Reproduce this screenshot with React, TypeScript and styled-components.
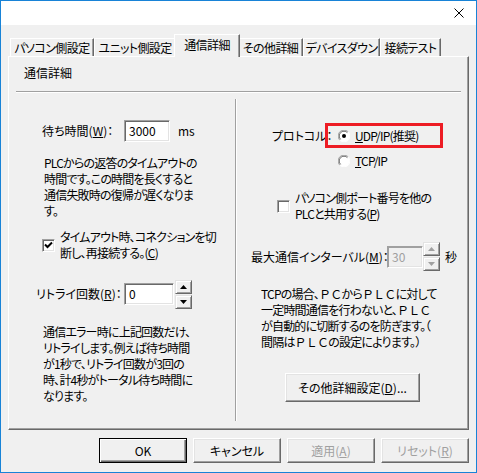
import React from 'react';
import styled, { createGlobalStyle, css } from 'styled-components';

const Global = createGlobalStyle`
  html, body { margin: 0; padding: 0; background: #fff; }
  body {
    font-family: "Noto Sans CJK JP", "Noto Sans", sans-serif;
    font-size: 12px;
    color: #000;
  }
  * { box-sizing: border-box; }
`;

const Window = styled.div`
  width: 477px;
  height: 473px;
  border: 1px solid #1883d7;
  background: #f0f0f0;
  display: flex;
  flex-direction: column;
  font-feature-settings: "palt";
`;

const TitleBar = styled.div`
  height: 24px;
  background: #fff;
  display: flex;
  justify-content: flex-end;
  align-items: center;
  padding-right: 12px;
`;

const Body = styled.div`
  padding: 9px 7px 0 7px;
  display: flex;
  flex-direction: column;
`;

const TabStrip = styled.div`
  height: 22px;
  display: flex;
  align-items: flex-end;
  padding-left: 2px;
`;

const Tab = styled.div<{ $w: number; $active?: boolean }>`
  width: ${p => p.$w}px;
  height: 18px;
  background: #f0f0f0;
  border-top: 1px solid #fff;
  border-left: 1px solid #fff;
  border-right: 1px solid #696969;
  box-shadow: inset -1px 0 0 #a0a0a0;
  display: flex;
  align-items: center;
  justify-content: center;
  line-height: 16px;
  white-space: nowrap;
  letter-spacing: -0.6px;
  ${p => p.$active && css`
    position: relative;
    z-index: 1;
    width: ${p.$w + 4}px;
    height: 23px;
    margin: 0 -2px -1px -2px;
    padding-bottom: 2px;
  `}
`;

const Panel = styled.div`
  height: 374px;
  border-top: 1px solid #fff;
  border-left: 1px solid #fff;
  border-right: 1px solid #696969;
  border-bottom: 1px solid #696969;
  box-shadow: inset -1px -1px 0 #a0a0a0;
  padding: 0 7px 0 7px;
  display: flex;
  flex-direction: column;
`;

const PanelHeader = styled.div`
  line-height: 16px;
  margin: 8px 0 0 8px;
`;

const HSep = styled.div`
  margin-top: 10px;
  height: 2px;
  border-top: 1px solid #a0a0a0;
  border-bottom: 1px solid #fff;
`;

const Columns = styled.div`
  margin-top: 6px;
  height: 322px;
  display: grid;
  grid-template-columns: 219px 2px 1fr;
`;

const VSep = styled.div`
  border-left: 1px solid #a0a0a0;
  border-right: 1px solid #fff;
`;

const Column = styled.div`
  display: flex;
  flex-direction: column;
  align-items: flex-start;
`;

const Row = styled.div<{ $mt: number; $pl: number; $h?: number; $gap?: number }>`
  display: flex;
  align-items: center;
  margin-top: ${p => p.$mt}px;
  padding-left: ${p => p.$pl}px;
  ${p => p.$h ? `height: ${p.$h}px;` : ''}
  gap: ${p => p.$gap ?? 0}px;
  white-space: nowrap;
`;

const Label = styled.span<{ $w: number }>`
  width: ${p => p.$w}px;
  line-height: 16px;
  white-space: nowrap;
`;

const Text = styled.div`
  line-height: 16px;
  white-space: nowrap;
  letter-spacing: -0.8px;
`;

const Para = styled.div<{ $mt: number; $pl: number }>`
  margin-top: ${p => p.$mt}px;
  padding-left: ${p => p.$pl}px;
  line-height: 16px;
  white-space: nowrap;
  letter-spacing: -0.8px;
`;

const Wide = styled.span`
  font-feature-settings: normal;
`;

const Key = styled.span`
  text-decoration: underline;
  text-underline-offset: 1px;
`;

const Input = styled.div<{ $w: number; $disabled?: boolean }>`
  width: ${p => p.$w}px;
  height: 22px;
  border: 1px solid;
  border-color: #a0a0a0 #fff #fff #a0a0a0;
  box-shadow: inset 1px 1px 0 ${p => (p.$disabled ? '#a0a0a0' : '#696969')}, inset -1px -1px 0 #e3e3e3;
  background: ${p => (p.$disabled ? '#f0f0f0' : '#fff')};
  color: ${p => (p.$disabled ? '#a0a0a0' : '#000')};
  padding-left: 4px;
  display: flex;
  align-items: center;
  line-height: 16px;
`;

const Unit = styled.span<{ $ml: number }>`
  margin-left: ${p => p.$ml}px;
  line-height: 16px;
`;

const Spinner = styled.div<{ $ml?: number }>`
  width: 17px;
  height: 29px;
  margin-left: ${p => p.$ml ?? 0}px;
  display: flex;
  flex-direction: column;
  justify-content: space-between;
`;

const SpinButton = styled.div`
  height: 14px;
  background: #f0f0f0;
  border: 1px solid;
  border-color: #e3e3e3 #696969 #696969 #e3e3e3;
  box-shadow: inset 1px 1px 0 #fff, inset -1px -1px 0 #a0a0a0;
  display: flex;
  align-items: center;
  justify-content: center;
`;

const CheckBox = styled.div`
  width: 13px;
  height: 13px;
  flex: none;
  border: 1px solid;
  border-color: #a0a0a0 #fff #fff #a0a0a0;
  box-shadow: inset 1px 1px 0 #696969, inset -1px -1px 0 #e3e3e3;
  background: #fff;
  display: flex;
  align-items: center;
  justify-content: center;
`;

const RedBox = styled.div`
  width: 118px;
  height: 25px;
  border: 3px solid #ed1c24;
  padding-left: 10px;
  display: flex;
  align-items: center;
  gap: 5px;
`;

const PushButton = styled.button<{ $w: number; $h: number; $default?: boolean; $disabled?: boolean }>`
  width: ${p => p.$w}px;
  height: ${p => p.$h}px;
  flex: none;
  font: inherit;
  font-feature-settings: "palt";
  line-height: 16px;
  padding: 0;
  background: #f0f0f0;
  color: ${p => (p.$disabled ? '#a0a0a0' : '#000')};
  border: 1px solid;
  border-color: #fff #696969 #696969 #fff;
  box-shadow: inset -1px -1px 0 #a0a0a0, inset 1px 1px 0 #e3e3e3;
  ${p => p.$default && css`
    border-color: #000;
    box-shadow: inset 1px 1px 0 #fff, inset -1px -1px 0 #696969, inset -2px -2px 0 #a0a0a0;
  `}
`;

const OptionButton = styled(PushButton)`
  margin-top: 23px;
  margin-left: 48px;
`;

const Footer = styled.div`
  margin-top: 8px;
  display: flex;
  justify-content: flex-end;
  gap: 6px;
`;

const CloseIcon = () => (
  <svg width="10" height="10" viewBox="0 0 10 10">
    <path d="M0.5 0.5 L9.5 9.5 M9.5 0.5 L0.5 9.5" stroke="#000" strokeWidth="1" fill="none" />
  </svg>
);

const Arrow = ({ up, disabled }: { up?: boolean; disabled?: boolean }) => (
  <svg width="7" height="4" viewBox="0 0 7 4">
    <path d={up ? 'M3.5 0 L7 4 L0 4 Z' : 'M0 0 L7 0 L3.5 4 Z'} fill={disabled ? '#a0a0a0' : '#000'} />
  </svg>
);

const Check = () => (
  <svg width="9" height="9" viewBox="0 0 9 9">
    <path d="M1 3.5 L3.5 6 L8 1.5" stroke="#000" strokeWidth="2" fill="none" />
  </svg>
);

const Radio = ({ on }: { on?: boolean }) => (
  <svg width="12" height="12" viewBox="0 0 12 12" style={{ flex: 'none' }}>
    <circle cx="6" cy="6" r="5.5" fill="#fff" />
    <path d="M1.8 10.2 A5.5 5.5 0 0 1 10.2 1.8" stroke="#a0a0a0" fill="none" />
    <path d="M10.2 1.8 A5.5 5.5 0 0 1 1.8 10.2" stroke="#fff" fill="none" />
    <path d="M2.6 9.4 A4.5 4.5 0 0 1 9.4 2.6" stroke="#696969" fill="none" />
    {on && <circle cx="6" cy="6" r="2" fill="#000" />}
  </svg>
);

const SpinBox = ({ disabled, ml }: { disabled?: boolean; ml?: number }) => (
  <Spinner $ml={ml}>
    <SpinButton><Arrow up disabled={disabled} /></SpinButton>
    <SpinButton><Arrow disabled={disabled} /></SpinButton>
  </Spinner>
);

const tabs: { label: string; w: number; active?: boolean }[] = [
  { label: 'パソコン側設定', w: 84 },
  { label: 'ユニット側設定', w: 82 },
  { label: '通信詳細', w: 62, active: true },
  { label: 'その他詳細', w: 65 },
  { label: 'デバイスダウン', w: 77 },
  { label: '接続テスト', w: 61 },
];

export default function App() {
  return (
    <>
      <Global />
      <Window>
        <TitleBar>
          <CloseIcon />
        </TitleBar>
        <Body>
          <TabStrip>
            {tabs.map(t => (
              <Tab key={t.label} $w={t.w} $active={t.active}>{t.label}</Tab>
            ))}
          </TabStrip>
          <Panel>
            <PanelHeader>通信詳細</PanelHeader>
            <HSep />
            <Columns>
              <Column>
                <Row $mt={21} $pl={26} $h={22}>
                  <Label $w={82}>待ち時間(<Key>W</Key>)：</Label>
                  <Input $w={46}>3000</Input>
                  <Unit $ml={8}>ms</Unit>
                </Row>
                <Para $mt={13} $pl={28}>
                  PLCからの返答のタイムアウトの<br />
                  時間です。この時間を長くすると<br />
                  通信失敗時の復帰が遅くなりま<br />
                  す。
                </Para>
                <Row $mt={10} $pl={26} $gap={5}>
                  <CheckBox><Check /></CheckBox>
                  <Text>
                    タイムアウト時、コネクションを切<br />
                    断し、再接続する。(<Key>C</Key>)
                  </Text>
                </Row>
                <Row $mt={18} $pl={20} $h={30}>
                  <Label $w={88}>リトライ回数(<Key>R</Key>)：</Label>
                  <Input $w={50}>0</Input>
                  <SpinBox ml={1} />
                </Row>
                <Para $mt={15} $pl={27}>
                  通信エラー時に上記回数だけ、<br />
                  リトライします。例えば待ち時間<br />
                  が1秒で、リトライ回数が3回の<br />
                  時、計4秒がトータル待ち時間に<br />
                  なります。
                </Para>
              </Column>
              <VSep />
              <Column>
                <Row $mt={24} $pl={35} $h={25}>
                  <Label $w={53}>プロトコル：</Label>
                  <RedBox>
                    <Radio on />
                    <Text><Key>U</Key>DP/IP(推奨)</Text>
                  </RedBox>
                </Row>
                <Row $mt={5} $pl={101} $h={16} $gap={5}>
                  <Radio />
                  <Text><Key>T</Key>CP/IP</Text>
                </Row>
                <Row $mt={21} $pl={40} $gap={5}>
                  <CheckBox />
                  <Text>
                    パソコン側ポート番号を他の<br />
                    PLCと共用する(<Key>P</Key>)
                  </Text>
                </Row>
                <Row $mt={20} $pl={14} $h={29}>
                  <Label $w={136}>最大通信インターバル(<Key>M</Key>)：</Label>
                  <Input $w={36} $disabled>30</Input>
                  <SpinBox disabled />
                  <Unit $ml={5}>秒</Unit>
                </Row>
                <Para $mt={15} $pl={24}>
                  TCPの場合、<Wide>ＰＣ</Wide>から<Wide>ＰＬＣ</Wide>に対して<br />
                  一定時間通信を行わないと、<Wide>ＰＬＣ</Wide><br />
                  が自動的に切断するのを防ぎます。<Wide>（</Wide><br />
                  間隔は<Wide>ＰＬＣ</Wide>の設定によります。<Wide>）</Wide>
                </Para>
                <OptionButton $w={135} $h={29}>その他詳細設定(<Key>D</Key>)...</OptionButton>
              </Column>
            </Columns>
          </Panel>
          <Footer>
            <PushButton $w={88} $h={25} $default>OK</PushButton>
            <PushButton $w={88} $h={25}>キャンセル</PushButton>
            <PushButton $w={88} $h={25} $disabled>適用(<Key>A</Key>)</PushButton>
            <PushButton $w={88} $h={25} $disabled>リセット(<Key>R</Key>)</PushButton>
          </Footer>
        </Body>
      </Window>
    </>
  );
}
